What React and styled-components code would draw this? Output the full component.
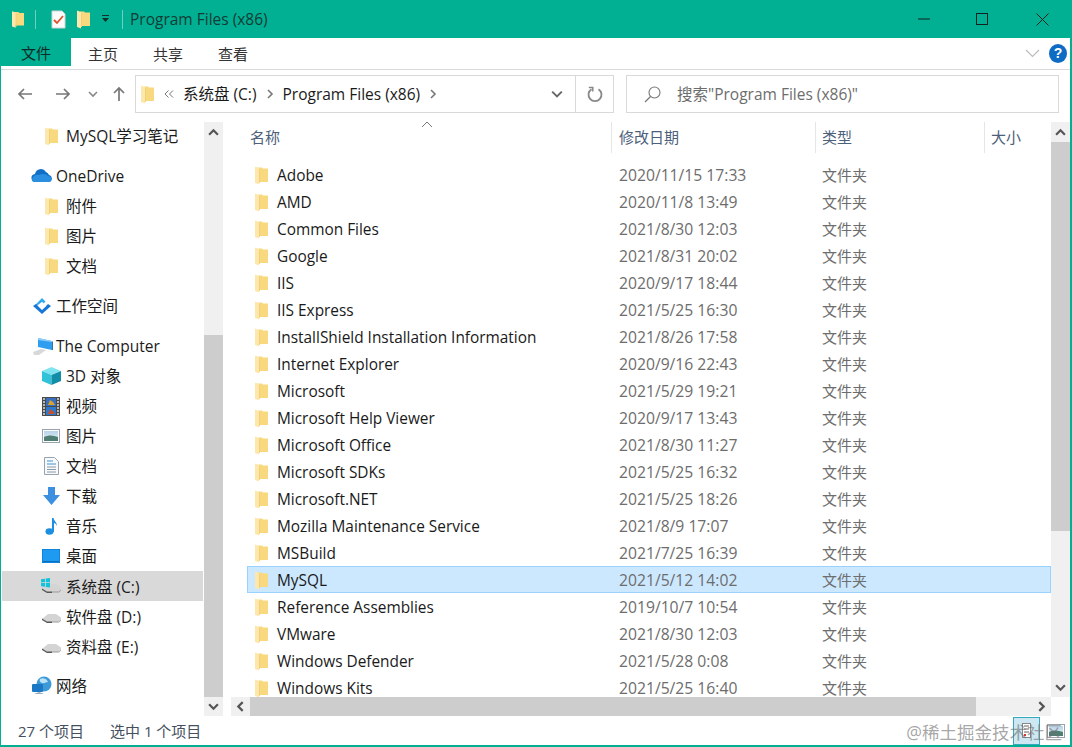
import React from 'react';
import styled, { createGlobalStyle } from 'styled-components';

const Global = createGlobalStyle`
  html, body { margin: 0; padding: 0; background: #fff; }
  body { font-family: "Open Sans", "Noto Sans CJK SC", sans-serif; font-size: 15.5px; }
  * { box-sizing: border-box; }
`;

const TEAL = '#01b092';

const Window = styled.div`
  position: relative;
  width: 1072px;
  height: 747px;
  display: flex;
  flex-direction: column;
  border-style: solid;
  border-color: ${TEAL};
  border-width: 0 2px 2px 1px;
  overflow: hidden;
  background: #fff;
`;
const TitleBar = styled.div`
  height: 38px;
  flex: none;
  display: flex;
  align-items: center;
  background: ${TEAL};
  padding-left: 11px;
`;
const TitleSlot = styled.div`
  width: ${(p) => p.$w}px;
  height: 24px;
  flex: none;
  display: flex;
  align-items: center;
  justify-content: center;
`;
const TitleSep = styled.div`
  width: 1px;
  height: 19px;
  background: #6fd0bf;
`;
const TitleText = styled.div`
  color: #123c36;
  line-height: 20px;
`;
const WindowControls = styled.div`
  margin-left: auto;
  display: flex;
`;
const ControlButton = styled.div`
  width: ${(p) => p.$w}px;
  height: 38px;
  display: flex;
  align-items: center;
  justify-content: center;
`;
const Ribbon = styled.div`
  height: 32px;
  flex: none;
  display: flex;
  align-items: flex-start;
  background: #fff;
  border-bottom: 1px solid #dadada;
`;
const FileTab = styled.div`
  width: 70px;
  height: 28px;
  background: ${TEAL};
  color: #0d2a26;
  font-size: 15px;
  display: flex;
  align-items: center;
  justify-content: center;
`;
const RibbonTab = styled.div`
  width: 65px;
  height: 30px;
  padding-right: 1px;
  color: #333;
  font-size: 15px;
  display: flex;
  align-items: center;
  justify-content: center;
`;
const RibbonRight = styled.div`
  margin-left: auto;
  display: flex;
  align-items: center;
  height: 30px;
  gap: 9px;
  padding-right: 3px;
`;
const HelpBadge = styled.div`
  width: 18px;
  height: 19px;
  border-radius: 50%;
  background: #0f6cc4;
  color: #fff;
  font: bold 14px/19px "Liberation Sans", sans-serif;
  text-align: center;
`;
const NavBar = styled.div`
  height: 50px;
  flex: none;
  display: flex;
  padding: 5px 11px 7px 5px;
`;
const NavButton = styled.div`
  width: ${(p) => p.$w}px;
  flex: none;
  display: flex;
  align-items: center;
  justify-content: center;
  color: ${(p) => p.$color};
`;
const Address = styled.div`
  width: 479px;
  flex: none;
  margin-left: 1px;
  display: flex;
  align-items: center;
  border: 1px solid #d9d9d9;
  padding-left: 5px;
  color: #1a1a1a;
`;
const Crumb = styled.div`
  width: ${(p) => p.$w}px;
  flex: none;
  display: flex;
  align-items: center;
  justify-content: center;
  color: #777;
`;
const BarText = styled.span`
  white-space: nowrap;
  padding-bottom: ${(p) => p.$lift ?? 2}px;
`;
const AddressDrop = styled.div`
  margin-left: auto;
  width: 36px;
  display: flex;
  justify-content: center;
  color: #666;
`;
const Refresh = styled.div`
  width: 38px;
  height: 100%;
  flex: none;
  border-left: 1px solid #d9d9d9;
  display: flex;
  align-items: center;
  justify-content: center;
`;
const SearchBox = styled.div`
  flex: 1;
  margin-left: 12px;
  border: 1px solid #d9d9d9;
  display: flex;
  align-items: center;
  padding-left: 16px;
  gap: 15px;
  color: #6d6d6d;
`;
const Main = styled.div`
  flex: 1;
  min-height: 0;
  display: flex;
  padding-top: 1px;
`;
const Sidebar = styled.div`
  width: 203px;
  flex: none;
  overflow: hidden;
`;
const NavRow = styled.div`
  height: 30px;
  margin: ${(p) => (p.$gap ? '10px' : '0')} 1px 0 1px;
  display: flex;
  align-items: center;
  padding-left: ${(p) => (p.$top ? 26 : 36)}px;
  background: ${(p) => (p.$active ? '#d9d9d9' : 'transparent')};
  color: #1b1b1b;
  white-space: nowrap;
`;
const NavIcon = styled.div`
  width: 28px;
  height: 24px;
  flex: none;
  padding-right: ${(p) => (p.$top ? 0 : 2)}px;
  display: flex;
  align-items: center;
  justify-content: center;
`;
const VScroll = styled.div`
  width: 19px;
  flex: none;
  margin-top: 1px;
  display: flex;
  flex-direction: column;
  background: #f0f0f0;
`;
const ScrollEnd = styled.div`
  flex: none;
  height: ${(p) => p.$size}px;
  display: flex;
  align-items: center;
  justify-content: center;
  color: #555;
`;
const VSpace = styled.div`
  height: ${(p) => p.$h}px;
  flex: ${(p) => (p.$fill ? 1 : 'none')};
  background: ${(p) => (p.$thumb ? '#cdcdcd' : 'transparent')};
`;
const Pane = styled.div`
  flex: 1;
  min-width: 0;
  margin-left: 8px;
  display: grid;
  grid-template-columns: 1fr 19px;
  grid-template-rows: 1fr 19px;
`;
const ListArea = styled.div`
  min-height: 0;
  overflow: hidden;
`;
const Header = styled.div`
  position: relative;
  height: 31px;
  margin-top: 1px;
  display: grid;
  grid-template-columns: 381px 204px 169px 1fr;
  color: #4c607a;
  font-size: 15px;
`;
const HeaderCell = styled.div`
  display: flex;
  align-items: center;
  padding-left: ${(p) => p.$pad}px;
  padding-bottom: 2px;
  border-right: ${(p) => (p.$last ? 'none' : '1px solid #e5e5e5')};
`;
const SortCaret = styled.div`
  position: absolute;
  left: 190px;
  top: -1px;
  color: #777;
  line-height: 0;
`;
const Rows = styled.div`
  margin: 8px 0 0 16px;
`;
const Row = styled.div`
  height: 27px;
  display: grid;
  grid-template-columns: 372px 203px 1fr;
  align-items: center;
  background: ${(p) => (p.$selected ? '#cce8ff' : 'transparent')};
  outline: ${(p) => (p.$selected ? '1px solid #99d1ff' : 'none')};
  outline-offset: -1px;
`;
const NameCell = styled.div`
  display: flex;
  align-items: center;
  padding: 2px 0 0 8px;
  gap: 9px;
  color: #1a1a1a;
  font-size: 15.4px;
  white-space: nowrap;
`;
const MetaCell = styled.div`
  color: #6d6d6d;
  white-space: nowrap;
  font-size: ${(p) => (p.$cjk ? 15 : 15.7)}px;
`;
const HScroll = styled.div`
  display: flex;
  background: #f0f0f0;
`;
const HThumb = styled.div`
  width: 726px;
  flex: none;
  background: #cdcdcd;
`;
const Spacer = styled.div`
  flex: 1;
`;
const StatusBar = styled.div`
  height: 29px;
  flex: none;
  display: flex;
  align-items: center;
  padding-left: 17px;
  color: #44505e;
  font-size: 15px;
`;
const StatusText = styled.span`
  width: ${(p) => p.$w}px;
  white-space: nowrap;
`;
const ViewToggles = styled.div`
  margin-left: auto;
  display: flex;
  align-items: center;
  gap: 6px;
  padding-right: 4px;
  height: 100%;
`;
const ViewButton = styled.div`
  width: ${(p) => p.$w}px;
  height: 28px;
  display: flex;
  align-items: center;
  justify-content: center;
  background: ${(p) => (p.$on ? '#cde8f2' : 'transparent')};
  border: ${(p) => (p.$on ? '1px solid #35a9bb' : 'none')};
`;
const Watermark = styled.div`
  position: absolute;
  right: 8px;
  bottom: 1px;
  font-size: 17.5px;
  line-height: 24px;
  color: rgba(110, 110, 110, 0.62);
  white-space: nowrap;
  pointer-events: none;
`;

/* ---- drawings ---- */
let uid = 0;
const Folder = () => (
  <svg width="13" height="19" viewBox="0 0 13 19">
    <path d="M3 1.500h4l1 1h5V16H3z" fill="#f9d97f" />
    <path d="M0 .5l4 1.500v16.500l-4-1.500z" fill="#fce8ae" />
    <path d="M4 3h1v14H4z" fill="#f5d070" />
  </svg>
);
const CheckDoc = () => (
  <svg width="15" height="19" viewBox="0 0 15 19">
    <path d="M1 1h10l3 3v14H1z" fill="#fbfbfb" stroke="#cfd6d6" />
    <path d="M3 10l3 3 6-7" fill="none" stroke="#e0522c" strokeWidth="1.8" />
  </svg>
);
const Cloud = () => (
  <svg width="22" height="14" viewBox="0 0 22 14">
    <path d="M5 13a4 4 0 0 1-1-8 6 6 0 0 1 11-2 5 5 0 0 1 3 3 3.600 3.600 0 0 1 0 7z" fill="#0f6fc6" />
    <path d="M1 10c1-3 4-5 7-4 3-2 8-1 9 1 2 0 4 2 4 3l-1 2-1 1H4c-2 0-3-1-3-3z" fill="#2a8fe0" />
  </svg>
);
const Diamond = () => (
  <svg width="20" height="18" viewBox="0 0 20 18">
    <path d="M10 1l3.500 3.500-2 2L10 5 4.500 9l-2.500.2z" fill="#35a9f0" />
    <path d="M1 9l3-2 6 6 6-6 3 2-9 8z" fill="#1677d8" />
    <path d="M10 5l4 4-4 3.500L6.500 9z" fill="#fff" />
  </svg>
);
const Computer = () => (
  <svg width="21" height="20" viewBox="0 0 21 20">
    <path d="M1 16l8-3 5 1-7 5H2z" fill="#d6d8da" />
    <path d="M6 2l14 3v9l-14-3z" fill="#2f9df0" />
    <path d="M6 2l14 3v1L6 4z" fill="#8fd0f8" />
    <path d="M20 5l1 1v8l-1 0z" fill="#3b6f9a" />
  </svg>
);
const Cube = () => (
  <svg width="19" height="18" viewBox="0 0 19 18">
    <path d="M9.500 0L19 4 9.500 8 0 4z" fill="#7fe4ef" />
    <path d="M0 4l9.500 4v10L0 14z" fill="#2fc2d8" />
    <path d="M19 4L9.500 8v10l9.500-4z" fill="#138ca8" />
  </svg>
);
const Film = () => (
  <svg width="18" height="19" viewBox="0 0 18 19">
    <rect width="18" height="19" fill="#4a4a4a" />
    <rect x="4" y="1" width="10" height="8" fill="#3a6fc0" />
    <rect x="4" y="10" width="10" height="8" fill="#2c7ad0" />
    <path d="M6 8l2-5 3 2 2 3z" fill="#d9a22b" />
    <path d="M6 17l2-5 3 2 2 3z" fill="#c9502b" />
    <path d="M1 2h2M1 5h2M1 8h2M1 11h2M1 14h2M1 17h2M15 2h2M15 5h2M15 8h2M15 11h2M15 14h2M15 17h2" stroke="#ddd" strokeWidth="1.300" />
  </svg>
);
const Picture = () => {
  const id = `sky${uid++}`;
  return (
    <svg width="18" height="14" viewBox="0 0 18 14">
      <defs>
        <linearGradient id={id} x1="0" y1="0" x2="0" y2="1">
          <stop offset="0" stopColor="#b7d3ea" />
          <stop offset="1" stopColor="#e8f1f5" />
        </linearGradient>
      </defs>
      <rect x=".5" y=".5" width="17" height="13" fill="#fff" stroke="#9aa3ad" />
      <rect x="2" y="2" width="14" height="10" fill={`url(#${id})`} />
      <path d="M2 8c4-2 9-2 14 0v4H2z" fill="#4f7f73" />
    </svg>
  );
};
const Doc = () => (
  <svg width="15" height="18" viewBox="0 0 15 18">
    <path d="M.5.5h10l4 4v13H.5z" fill="#f7f9fb" stroke="#9aa3ad" />
    <path d="M3 4h6M3 7h9" stroke="#3c95d6" strokeWidth="1" />
    <path d="M3 10h9M3 12.500h9M3 15h9" stroke="#8a99a8" strokeWidth="1" />
  </svg>
);
const DownArrow = () => (
  <svg width="17" height="18" viewBox="0 0 17 18">
    <path d="M5 0h7v8h5l-8.500 10L0 8h5z" fill="#3d8fe0" />
  </svg>
);
const Note = () => (
  <svg width="12" height="18" viewBox="0 0 12 18">
    <ellipse cx="4.500" cy="14.500" rx="4" ry="3.300" fill="#1c8fe0" />
    <path d="M7 1h1.500c.5 3 3.500 4 3.500 8-1-2-2-3-3-3v9H7z" fill="#1c8fe0" />
  </svg>
);
const Desktop = () => (
  <svg width="18" height="14" viewBox="0 0 18 14">
    <rect width="18" height="14" fill="#1e9af0" stroke="#0a6fc0" />
    <rect x="1" y="12" width="16" height="1" fill="#0a6fc0" />
  </svg>
);
const Drive = ({ win }) => (
  <svg width="20" height="16" viewBox="0 0 20 16">
    <path d="M7 6h8l5 3.500v2L17 14H7L1 11z" fill="#d4d4d4" />
    <path d="M1 10.500L6 13.500h5V15H6l-5-3z" fill="#585858" />
    <path d="M11 13.500h7l2-2v1l-2 2h-7z" fill="#9a9a9a" />
    {win && (
      <g fill="#14c2dc">
        <path d="M0 1.300L4 .7v3.600H0zM4.800.6L9 0v4.300H4.800zM0 5.100h4v3.700L0 8.200zM4.800 5.100H9v4.400L4.800 8.900z" />
      </g>
    )}
  </svg>
);
const Globe = () => (
  <svg width="20" height="20" viewBox="0 0 20 20">
    <circle cx="12" cy="8" r="7.500" fill="#3d9ad8" />
    <path d="M8 3c3-2 7 0 8 3-3 0-4 2-6 1S7 5 8 3z" fill="#bde2f5" />
    <rect x="0" y="8" width="11" height="8" rx="1" fill="#1b78c4" />
    <path d="M2 18l5-2 5 2z" fill="#9ab" />
  </svg>
);
const Chevron = ({ d, size = 10, sw = 1.600 }) => {
  const paths = {
    up: 'M1 7l4-4 4 4',
    down: 'M1 3l4 4 4-4',
    left: 'M7 1L3 5l4 4',
    right: 'M3 1l4 4-4 4',
  };
  return (
    <svg width={size} height={size} viewBox="0 0 10 10">
      <path d={paths[d]} fill="none" stroke="currentColor" strokeWidth={sw} />
    </svg>
  );
};
const Arrow = ({ d }) => {
  const paths = {
    left: 'M15 8H2M7 3L2 8l5 5',
    right: 'M1 8h13M9 3l5 5-5 5',
    up: 'M8 15V2M3 7l5-5 5 5',
  };
  return (
    <svg width="16" height="16" viewBox="0 0 16 16">
      <path d={paths[d]} fill="none" stroke="currentColor" strokeWidth="1.700" />
    </svg>
  );
};

const navItems = [
  { label: 'MySQL学习笔记', Icon: Folder },
  { label: 'OneDrive', Icon: Cloud, top: true, gap: true, lift: 0 },
  { label: '附件', Icon: Folder },
  { label: '图片', Icon: Folder },
  { label: '文档', Icon: Folder },
  { label: '工作空间', Icon: Diamond, top: true, gap: true },
  { label: 'The Computer', Icon: Computer, top: true, gap: true, lift: 0 },
  { label: '3D 对象', Icon: Cube },
  { label: '视频', Icon: Film },
  { label: '图片', Icon: Picture },
  { label: '文档', Icon: Doc },
  { label: '下载', Icon: DownArrow },
  { label: '音乐', Icon: Note },
  { label: '桌面', Icon: Desktop },
  { label: '系统盘 (C:)', Icon: () => <Drive win />, active: true, lift: 0 },
  { label: '软件盘 (D:)', Icon: Drive, lift: 0 },
  { label: '资料盘 (E:)', Icon: Drive, lift: 0 },
  { label: '网络', Icon: Globe, top: true, gap: true },
];

const files = [
  ['Adobe', '2020/11/15 17:33'],
  ['AMD', '2020/11/8 13:49'],
  ['Common Files', '2021/8/30 12:03'],
  ['Google', '2021/8/31 20:02'],
  ['IIS', '2020/9/17 18:44'],
  ['IIS Express', '2021/5/25 16:30'],
  ['InstallShield Installation Information', '2021/8/26 17:58'],
  ['Internet Explorer', '2020/9/16 22:43'],
  ['Microsoft', '2021/5/29 19:21'],
  ['Microsoft Help Viewer', '2020/9/17 13:43'],
  ['Microsoft Office', '2021/8/30 11:27'],
  ['Microsoft SDKs', '2021/5/25 16:32'],
  ['Microsoft.NET', '2021/5/25 18:26'],
  ['Mozilla Maintenance Service', '2021/8/9 17:07'],
  ['MSBuild', '2021/7/25 16:39'],
  ['MySQL', '2021/5/12 14:02'],
  ['Reference Assemblies', '2019/10/7 10:54'],
  ['VMware', '2021/8/30 12:03'],
  ['Windows Defender', '2021/5/28 0:08'],
  ['Windows Kits', '2021/5/25 16:40'],
];

export default function App() {
  return (
    <>
      <Global />
      <Window>
        <TitleBar>
          <TitleSlot $w={12}><Folder /></TitleSlot>
          <TitleSlot $w={22}><TitleSep /></TitleSlot>
          <TitleSlot $w={24}><CheckDoc /></TitleSlot>
          <TitleSlot $w={26}><Folder /></TitleSlot>
          <TitleSlot $w={18}>
            <svg width="9" height="8" viewBox="0 0 9 8">
              <path d="M1 0h7v1H1zM1 3h7L4.500 7z" fill="#12302b" />
            </svg>
          </TitleSlot>
          <TitleSlot $w={16}><TitleSep /></TitleSlot>
          <TitleText>Program Files (x86)</TitleText>
          <WindowControls>
            <ControlButton $w={52}>
              <svg width="12" height="2" viewBox="0 0 12 2"><path d="M0 1h12" stroke="#10201d" /></svg>
            </ControlButton>
            <ControlButton $w={64}>
              <svg width="12" height="12" viewBox="0 0 12 12"><rect x=".5" y=".5" width="11" height="11" fill="none" stroke="#10201d" /></svg>
            </ControlButton>
            <ControlButton $w={56}>
              <svg width="13" height="13" viewBox="0 0 13 13"><path d="M.5.5l12 12M12.500.5l-12 12" stroke="#10201d" /></svg>
            </ControlButton>
          </WindowControls>
        </TitleBar>

        <Ribbon>
          <FileTab>文件</FileTab>
          <RibbonTab>主页</RibbonTab>
          <RibbonTab>共享</RibbonTab>
          <RibbonTab>查看</RibbonTab>
          <RibbonRight>
            <svg width="15" height="9" viewBox="0 0 15 9"><path d="M1 1l6.500 6.500L14 1" fill="none" stroke="#bcbcbc" strokeWidth="1.200" /></svg>
            <HelpBadge>?</HelpBadge>
          </RibbonRight>
        </Ribbon>

        <NavBar>
          <NavButton $w={38} $color="#777"><Arrow d="left" /></NavButton>
          <NavButton $w={38} $color="#777"><Arrow d="right" /></NavButton>
          <NavButton $w={22} $color="#888"><Chevron d="down" /></NavButton>
          <NavButton $w={30} $color="#777"><Arrow d="up" /></NavButton>
          <Address>
            <Folder />
            <Crumb $w={29}>
              <svg width="10" height="10" viewBox="0 0 10 10"><path d="M4.500 1.500L1 5l3.500 3.500M9 1.500L5.500 5 9 8.500" fill="none" stroke="currentColor" /></svg>
            </Crumb>
            <BarText $lift={1}>系统盘 (C:)</BarText>
            <Crumb $w={26}><Chevron d="right" /></Crumb>
            <BarText $lift={1}>Program Files (x86)</BarText>
            <Crumb $w={26}><Chevron d="right" /></Crumb>
            <AddressDrop><Chevron d="down" size={12} /></AddressDrop>
            <Refresh>
              <svg width="16" height="17" viewBox="0 0 16 17">
                <path d="M4.500 3.200A6.500 6.500 0 1 0 11.500 3.200" fill="none" stroke="#888" strokeWidth="1.800" />
                <path d="M1.800 1.500h4v4" fill="none" stroke="#888" strokeWidth="1.500" />
              </svg>
            </Refresh>
          </Address>
          <SearchBox>
            <svg width="19" height="19" viewBox="0 0 19 19">
              <circle cx="11.500" cy="7.500" r="5.500" fill="none" stroke="#777" strokeWidth="1.100" />
              <path d="M7.500 11.500L2 17" stroke="#777" strokeWidth="1.200" />
            </svg>
            <BarText>搜索"Program Files (x86)"</BarText>
          </SearchBox>
        </NavBar>

        <Main>
          <Sidebar>
            {navItems.map((it, i) => (
              <NavRow key={i} $gap={it.gap} $top={it.top} $active={it.active}>
                <NavIcon $top={it.top}><it.Icon /></NavIcon>
                <BarText $lift={it.lift}>{it.label}</BarText>
              </NavRow>
            ))}
          </Sidebar>
          <VScroll>
            <ScrollEnd $size={20}><Chevron d="up" size={11} sw={2} /></ScrollEnd>
            <VSpace $h={193} />
            <VSpace $fill $thumb />
            <ScrollEnd $size={19}><Chevron d="down" size={11} sw={2} /></ScrollEnd>
          </VScroll>
          <Pane>
            <ListArea>
              <Header>
                <HeaderCell $pad={19}>名称</HeaderCell>
                <HeaderCell $pad={7}>修改日期</HeaderCell>
                <HeaderCell $pad={6}>类型</HeaderCell>
                <HeaderCell $pad={6} $last>大小</HeaderCell>
                <SortCaret>
                  <svg width="12" height="8" viewBox="0 0 12 8"><path d="M1 6l5-5 5 5" fill="none" stroke="currentColor" /></svg>
                </SortCaret>
              </Header>
              <Rows>
                {files.map(([name, date]) => (
                  <Row key={name} $selected={name === 'MySQL'}>
                    <NameCell><Folder />{name}</NameCell>
                    <MetaCell>{date}</MetaCell>
                    <MetaCell $cjk>文件夹</MetaCell>
                  </Row>
                ))}
              </Rows>
            </ListArea>
            <VScroll>
              <ScrollEnd $size={20}><Chevron d="up" size={11} sw={2} /></ScrollEnd>
              <VSpace $h={389} $thumb />
              <VSpace $fill />
              <ScrollEnd $size={20}><Chevron d="down" size={11} sw={2} /></ScrollEnd>
            </VScroll>
            <HScroll>
              <NavButton $w={19} $color="#555"><Chevron d="left" size={11} sw={2} /></NavButton>
              <HThumb />
              <Spacer />
              <NavButton $w={20} $color="#555"><Chevron d="right" size={11} sw={2} /></NavButton>
            </HScroll>
            <div />
          </Pane>
        </Main>

        <StatusBar>
          <StatusText $w={92}>27 个项目</StatusText>
          <StatusText $w={110}>选中 1 个项目</StatusText>
          <ViewToggles>
            <ViewButton $w={27} $on>
              <svg width="9" height="15" viewBox="0 0 9 15">
                <rect x=".5" y=".5" width="8" height="14" fill="#fff" stroke="#888" />
                <path d="M2 3h5M2 6h5M2 9h5" stroke="#666" />
                <rect x="2" y="11" width="2" height="2" fill="#d33" />
              </svg>
            </ViewButton>
            <ViewButton $w={20}><Picture /></ViewButton>
          </ViewToggles>
        </StatusBar>
        <Watermark>@稀土掘金技术社区</Watermark>
      </Window>
    </>
  );
}
